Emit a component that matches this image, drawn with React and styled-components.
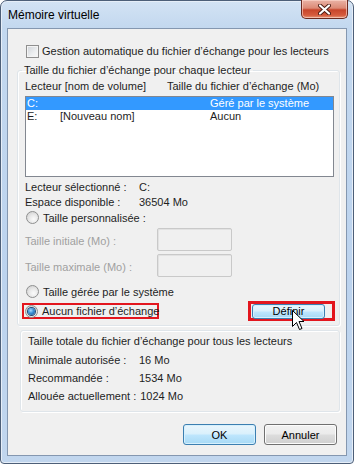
import React from 'react'
import styled, { createGlobalStyle, css } from 'styled-components'

const GlobalStyle = createGlobalStyle`
  body {
    margin: 0;
    background: #ffffff;
    font-family: "Liberation Sans", "Noto Sans", sans-serif;
    font-size: 11px;
    color: #1e1e1e;
  }
  * { box-sizing: border-box; }
`

const Window = styled.div`
  position: relative;
  width: 354px;
  height: 464px;
  border: 1px solid #4d5f78;
  border-radius: 7px 7px 4px 4px;
  background: linear-gradient(180deg, #d3e3f4 0px, #c3d8ef 26px, #bcd3ee 60%, #c1d6ee 100%);
  padding: 0 6px 7px 6px;
  display: flex;
  flex-direction: column;
  box-shadow: inset 0 0 0 1px #e6eef8;
  white-space: nowrap;
`

const TitleBar = styled.div`
  height: 27px;
  display: flex;
  justify-content: space-between;
  align-items: flex-start;
`

const Title = styled.span`
  margin: 7px 0 0 1px;
  font-size: 12px;
  color: #000;
  line-height: 14px;
`

const CloseButton = styled.div`
  width: 47px;
  height: 19px;
  margin-top: -1px;
  margin-right: -1px;
  border: 1px solid #6b2a20;
  border-top: none;
  border-radius: 0 0 5px 5px;
  background: linear-gradient(180deg, #eab3a6 0%, #dc8a76 45%, #c7452b 55%, #d65c3e 85%, #e49a7d 100%);
  box-shadow: inset 0 0 0 1px rgba(255, 220, 210, 0.6);
  display: flex;
  align-items: center;
  justify-content: center;
`

const Client = styled.div`
  flex: 1;
  border: 1px solid #8497b0;
  background: #f0f0f0;
  display: flex;
  flex-direction: column;
`

const CheckRow = styled.label`
  display: flex;
  align-items: center;
  height: 14px;
  margin: 15px 0 0 18px;
  gap: 3px;
`

const CheckBox = styled.span`
  flex-shrink: 0;
  width: 13px;
  height: 13px;
  border: 1px solid #8f8f8f;
  background: linear-gradient(135deg, #cfd3d8 0%, #eceef0 60%, #f8f8f8 100%);
  box-shadow: inset 0 0 0 1px #f4f4f4;
`

const Group = styled.fieldset`
  margin: 5px 0 0 9px;
  width: 323px;
  min-width: 0;
  padding: 0 7px 4px 7px;
  border: 1px solid #dfe5ea;
  border-radius: 3px;
  box-shadow: inset 1px 1px 0 #ffffff, 1px 1px 0 #ffffff;
  display: flex;
  flex-direction: column;
`

const Legend = styled.legend`
  padding: 0 2px;
  margin-left: -3px;
  line-height: 14px;
  height: 14px;
`

const HeaderRow = styled.div`
  display: flex;
  height: 14px;
  margin-top: 2px;
  line-height: 14px;
`

const HeaderCell = styled.span`
  flex-shrink: 0;
  width: ${p => p.$w || 'auto'};
`

const ListBox = styled.div`
  margin-top: 3px;
  width: 309px;
  height: 81px;
  border: 1px solid #828790;
  background: #ffffff;
`

const ListRow = styled.div`
  display: flex;
  height: 13px;
  line-height: 13px;
  padding-left: 1px;
  ${p => p.$selected && css`
    background: #3399ff;
    color: #ffffff;
  `}
`

const ListCell = styled.span`
  flex-shrink: 0;
  width: ${p => p.$w};
`

const InfoRow = styled.div`
  display: flex;
  height: 15px;
  line-height: 15px;
  margin-top: ${p => p.$mt || 0}px;
`

const InfoLabel = styled.span`
  flex-shrink: 0;
  width: 114px;
`

const RadioRow = styled.label`
  display: flex;
  align-items: center;
  gap: 4px;
  height: 15px;
  margin-top: ${p => p.$mt || 0}px;
  padding-left: 1px;
`

const Radio = styled.span`
  flex-shrink: 0;
  width: 13px;
  height: 13px;
  border-radius: 50%;
  border: 1px solid #8e8f8f;
  background: radial-gradient(circle at 60% 65%, #fbfbfb 0%, #e8e8e8 45%, #c9c9c9 100%);
  display: flex;
  align-items: center;
  justify-content: center;
  ${p => p.$checked && css`
    &::after {
      content: '';
      width: 7px;
      height: 7px;
      border-radius: 50%;
      background: radial-gradient(circle at 40% 35%, #a8dcff 0%, #3a8fd6 45%, #16528d 100%);
      box-shadow: 0 0 0 1px #1c4a7a;
    }
  `}
`

const SizeRow = styled.div`
  display: flex;
  align-items: center;
  height: 23px;
  margin-top: 3px;
  color: #a0a0a0;
`

const SizeLabel = styled.span`
  flex-shrink: 0;
  width: 132px;
  padding-top: 2px;
`

const SizeInput = styled.div`
  width: 75px;
  height: 23px;
  border: 1px solid #c9c9c9;
  border-radius: 2px;
  background: #f0f0f0;
  box-shadow: inset 1px 1px 0 #e2e2e2;
`

const ActionRow = styled.div`
  display: flex;
  justify-content: space-between;
  align-items: center;
  height: 20px;
  margin-top: 2px;
`

const Highlight = styled.div`
  display: flex;
  align-items: center;
  gap: 4px;
  width: 137px;
  height: 16px;
  margin-left: -3px;
  padding-left: 1px;
  border: 2px solid #e3161e;
`

const ButtonFrame = styled.div`
  width: 87px;
  height: 20px;
  margin-right: -3px;
  border: 3px solid #e3161e;
  padding: 0 6px 0 1px;
  display: flex;
  align-items: center;
`

const Button = styled.div`
  width: ${p => p.$w || 73}px;
  height: ${p => p.$h || 21}px;
  border: 1px solid #707070;
  border-radius: 3px;
  display: flex;
  align-items: center;
  justify-content: center;
  color: #000;
  background: linear-gradient(180deg, #f2f2f2 0%, #ebebeb 48%, #dddddd 52%, #cfcfcf 100%);
  box-shadow: inset 0 0 0 1px #fcfcfc;
  ${p => p.$blue && css`
    border-color: #3c7fb1;
    background: linear-gradient(180deg, #eaf6fd 0%, #d9f0fc 48%, #bee6fd 52%, #a7d9f5 100%);
    box-shadow: inset 0 0 0 1px #d6f0fd;
  `}
`

const Group2 = styled.div`
  margin: 4px 0 0 12px;
  width: 320px;
  padding: 3px 0 6px 7px;
  border: 1px solid #dfe5ea;
  border-radius: 3px;
  box-shadow: inset 1px 1px 0 #ffffff, 1px 1px 0 #ffffff;
`

const GroupTitle = styled.div`
  height: 14px;
  line-height: 14px;
  margin-bottom: 3px;
`

const TotalRow = styled.div`
  display: flex;
  height: 18px;
  line-height: 18px;
`

const TotalLabel = styled.span`
  flex-shrink: 0;
  min-width: 111px;
  padding-right: 4px;
`

const ButtonBar = styled.div`
  display: flex;
  justify-content: flex-end;
  gap: 8px;
  margin-top: 12px;
  padding-right: 9px;
`

const Cursor = styled.svg`
  position: absolute;
  left: 291px;
  top: 309px;
`

export default function App() {
  return (
    <>
      <GlobalStyle />
      <Window>
        <TitleBar>
          <Title>Mémoire virtuelle</Title>
          <CloseButton>
            <svg width="13" height="11" viewBox="0 0 13 11">
              <path d="M2 1.5 L11 9.5 M11 1.5 L2 9.5" stroke="#4a1a12" strokeWidth="4" strokeLinecap="round" />
              <path d="M2 1.5 L11 9.5 M11 1.5 L2 9.5" stroke="#ffffff" strokeWidth="2.2" strokeLinecap="round" />
            </svg>
          </CloseButton>
        </TitleBar>
        <Client>
          <CheckRow>
            <CheckBox />
            <span>Gestion automatique du fichier d’échange pour les lecteurs</span>
          </CheckRow>
          <Group>
            <Legend>Taille du fichier d’échange pour chaque lecteur</Legend>
            <HeaderRow>
              <HeaderCell $w="142px">Lecteur [nom de volume]</HeaderCell>
              <HeaderCell>Taille du fichier d’échange (Mo)</HeaderCell>
            </HeaderRow>
            <ListBox>
              <ListRow $selected>
                <ListCell $w="33px">C:</ListCell>
                <ListCell $w="150px"></ListCell>
                <ListCell $w="auto">Géré par le système</ListCell>
              </ListRow>
              <ListRow>
                <ListCell $w="33px">E:</ListCell>
                <ListCell $w="150px">[Nouveau nom]</ListCell>
                <ListCell $w="auto">Aucun</ListCell>
              </ListRow>
            </ListBox>
            <InfoRow $mt={3}>
              <InfoLabel>Lecteur sélectionné :</InfoLabel>
              <span>C:</span>
            </InfoRow>
            <InfoRow>
              <InfoLabel>Espace disponible :</InfoLabel>
              <span>36504 Mo</span>
            </InfoRow>
            <RadioRow>
              <Radio />
              <span>Taille personnalisée :</span>
            </RadioRow>
            <SizeRow>
              <SizeLabel>Taille initiale (Mo) :</SizeLabel>
              <SizeInput />
            </SizeRow>
            <SizeRow>
              <SizeLabel>Taille maximale (Mo) :</SizeLabel>
              <SizeInput />
            </SizeRow>
            <RadioRow $mt={7}>
              <Radio />
              <span>Taille gérée par le système</span>
            </RadioRow>
            <ActionRow>
              <Highlight>
                <Radio $checked />
                <span>Aucun fichier d’échange</span>
              </Highlight>
              <ButtonFrame>
                <Button $blue $w={73} $h={15}>Définir</Button>
              </ButtonFrame>
            </ActionRow>
          </Group>
          <Group2>
            <GroupTitle>Taille totale du fichier d’échange pour tous les lecteurs</GroupTitle>
            <TotalRow>
              <TotalLabel>Minimale autorisée :</TotalLabel>
              <span>16 Mo</span>
            </TotalRow>
            <TotalRow>
              <TotalLabel>Recommandée :</TotalLabel>
              <span>1534 Mo</span>
            </TotalRow>
            <TotalRow>
              <TotalLabel>Allouée actuellement :</TotalLabel>
              <span>1024 Mo</span>
            </TotalRow>
          </Group2>
          <ButtonBar>
            <Button $blue>OK</Button>
            <Button>Annuler</Button>
          </ButtonBar>
        </Client>
        <Cursor width="13" height="21" viewBox="0 0 13 21">
          <path d="M0.5 0.5 L0.5 16.5 L4.5 12.5 L7.5 19.5 L10 18.5 L7 11.5 L12 11.5 Z" fill="#ffffff" stroke="#000000" strokeWidth="1" />
        </Cursor>
      </Window>
    </>
  )
}
